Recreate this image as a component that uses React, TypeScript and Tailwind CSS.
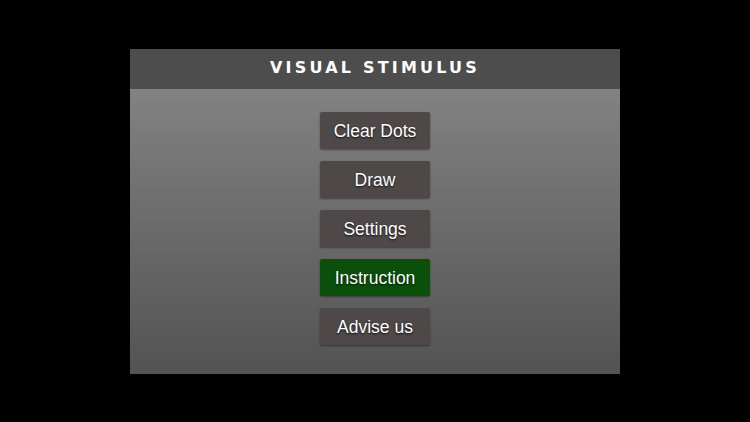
const items = [
  { label: 'Clear Dots', active: false },
  { label: 'Draw', active: false },
  { label: 'Settings', active: false },
  { label: 'Instruction', active: true },
  { label: 'Advise us', active: false },
];

const buttonBase =
  "w-[110px] h-[37px] pt-[2px] rounded-[2px] flex items-center justify-center text-white text-[17.5px] font-['Liberation_Sans',Arial,sans-serif] [text-shadow:0_1px_2px_rgba(0,0,0,0.8)] shadow-[0_1px_2px_rgba(0,0,0,0.4)]";

export default function App() {
  return (
    <div className="w-[750px] h-[422px] bg-black flex items-center justify-center">
      <div className="w-[490px] h-[325px] flex flex-col">
        <div className="h-[40px] bg-[#4d4d4d] flex items-center justify-center pb-[1px]">
          <h1 className="text-white font-bold text-[16px] tracking-[0.2em] font-['DejaVu_Sans',sans-serif]">
            VISUAL STIMULUS
          </h1>
        </div>
        <div className="flex-1 bg-gradient-to-b from-[#828282] to-[#535353] flex flex-col items-center gap-[12px] pt-[23px]">
          {items.map((item) => (
            <button
              key={item.label}
              className={buttonBase + (item.active ? ' bg-[#0a500a]' : ' bg-[#4e4848]')}
            >
              {item.label}
            </button>
          ))}
        </div>
      </div>
    </div>
  );
}
